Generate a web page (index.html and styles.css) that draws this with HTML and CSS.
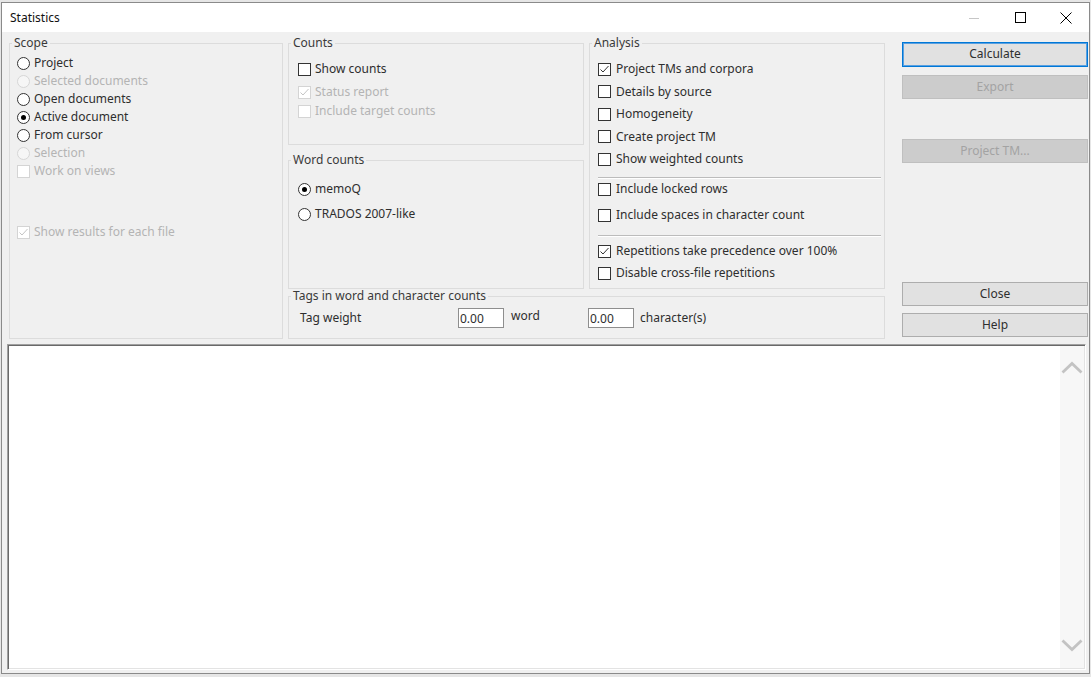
FILE: index.html
```html
<!DOCTYPE html>
<html>
<head>
<meta charset="utf-8">
<title>Statistics</title>
<link rel="stylesheet" href="styles.css">
</head>
<body>
<div class="window">
  <div class="titlebar">
    <span class="title">Statistics</span>
    <div class="caption">
      <span class="cap-btn"><svg width="10" height="10" viewBox="0 0 10 10"><line x1="0" y1="5.5" x2="10" y2="5.5" stroke="#c6c6c6" stroke-width="1"/></svg></span>
      <span class="cap-btn"><svg width="11" height="11" viewBox="0 0 11 11"><rect x="0.5" y="0.5" width="10" height="10" fill="none" stroke="#000" stroke-width="1"/></svg></span>
      <span class="cap-btn"><svg width="12" height="12" viewBox="0 0 12 12"><path d="M0.5 0.5 L11.5 11.5 M11.5 0.5 L0.5 11.5" stroke="#000" stroke-width="1" fill="none"/></svg></span>
    </div>
  </div>
  <div class="client">
    <div class="top">
      <fieldset class="group scope">
        <legend>Scope</legend>
        <div class="gbody scope-body">
          <div class="opt"><span class="rb"></span>Project</div>
          <div class="opt dis"><span class="rb"></span>Selected documents</div>
          <div class="opt"><span class="rb"></span>Open documents</div>
          <div class="opt"><span class="rb on"></span>Active document</div>
          <div class="opt"><span class="rb"></span>From cursor</div>
          <div class="opt dis"><span class="rb"></span>Selection</div>
          <div class="opt dis"><span class="cb"></span>Work on views</div>
          <div class="opt dis each"><span class="cb"><svg width="11" height="11" viewBox="0 0 11 11"><polyline points="1.5,5.5 4,8 9.5,2" fill="none" stroke="#c4c4c4" stroke-width="1"/></svg></span>Show results for each file</div>
        </div>
      </fieldset>

      <div class="center">
        <div class="cols">
          <div class="midcol">
            <fieldset class="group counts">
              <legend>Counts</legend>
              <div class="gbody counts-body">
                <div class="opt"><span class="cb"></span>Show counts</div>
                <div class="opt dis r2"><span class="cb"><svg width="11" height="11" viewBox="0 0 11 11"><polyline points="1.5,5.5 4,8 9.5,2" fill="none" stroke="#c4c4c4" stroke-width="1"/></svg></span>Status report</div>
                <div class="opt dis r3"><span class="cb"></span>Include target counts</div>
              </div>
            </fieldset>
            <fieldset class="group wordcounts">
              <legend>Word counts</legend>
              <div class="gbody wc-body">
                <div class="opt"><span class="rb on"></span>memoQ</div>
                <div class="opt r2"><span class="rb"></span>TRADOS 2007-like</div>
              </div>
            </fieldset>
          </div>
          <fieldset class="group analysis">
            <legend>Analysis</legend>
            <div class="gbody an-body">
              <div class="opt"><span class="cb"><svg width="11" height="11" viewBox="0 0 11 11"><polyline points="1.5,5.5 4,8 9.5,2" fill="none" stroke="#333" stroke-width="1"/></svg></span>Project TMs and corpora</div>
              <div class="opt"><span class="cb"></span>Details by source</div>
              <div class="opt"><span class="cb"></span>Homogeneity</div>
              <div class="opt"><span class="cb"></span>Create project TM</div>
              <div class="opt"><span class="cb"></span>Show weighted counts</div>
              <div class="sep sep1"></div>
              <div class="opt"><span class="cb"></span>Include locked rows</div>
              <div class="opt m6"><span class="cb"></span>Include spaces in character count</div>
              <div class="sep sep2"></div>
              <div class="opt m4"><span class="cb"><svg width="11" height="11" viewBox="0 0 11 11"><polyline points="1.5,5.5 4,8 9.5,2" fill="none" stroke="#333" stroke-width="1"/></svg></span>Repetitions take precedence over 100%</div>
              <div class="opt m2"><span class="cb"></span>Disable cross-file repetitions</div>
            </div>
          </fieldset>
        </div>
        <fieldset class="group tags">
          <legend>Tags in word and character counts</legend>
          <div class="gbody tags-body">
            <span class="tw">Tag weight</span>
            <input class="num" type="text" value="0.00">
            <span class="word">word</span>
            <input class="num" type="text" value="0.00">
            <span class="chars">character(s)</span>
          </div>
        </fieldset>
      </div>

      <div class="buttons">
        <div class="btn default b-calc">Calculate</div>
        <div class="btn disabled b-export">Export</div>
        <div class="btn disabled b-ptm">Project TM...</div>
        <div class="btn b-close">Close</div>
        <div class="btn b-help">Help</div>
      </div>
    </div>

    <div class="output">
      <div class="out-text"></div>
      <div class="scroll">
        <svg width="22" height="13" viewBox="0 0 22 13"><path d="M1.5 11.5 L11 2.5 L20.5 11.5" fill="none" stroke="#c3c3c3" stroke-width="2.8"/></svg>
        <svg width="22" height="13" viewBox="0 0 22 13"><path d="M1.5 1.5 L11 10.5 L20.5 1.5" fill="none" stroke="#c3c3c3" stroke-width="2.8"/></svg>
      </div>
    </div>
  </div>
</div>
</body>
</html>
```

FILE: styles.css
```css
html, body {
  margin: 0;
  padding: 0;
}
body {
  background: #e6e6e6;
  font-family: "Noto Sans", "Liberation Sans", sans-serif;
  font-size: 12px;
  color: #333;
  overflow: hidden;
  width: 1091px;
  height: 677px;
}
.window {
  margin: 2px 0 0 1px;
  width: 1089px;
  height: 672px;
  box-sizing: border-box;
  border: 1px solid #8a8a8a;
  background: #f0f0f0;
  display: flex;
  flex-direction: column;
}
.titlebar {
  height: 29px;
  flex: none;
  background: #fff;
  display: flex;
  align-items: center;
}
.title {
  flex: 1;
  padding-left: 8px;
  line-height: 14px;
  color: #111;
}
.caption {
  display: flex;
  height: 29px;
}
.cap-btn {
  width: 46px;
  display: flex;
  align-items: center;
  justify-content: center;
}
.client {
  flex: 1;
  display: flex;
  flex-direction: column;
  padding: 4px 1px 3px 5px;
  min-height: 0;
}
.top {
  display: flex;
  height: 303px;
  margin-left: 2px;
  flex: none;
}
fieldset.group {
  margin: 0;
  padding: 0;
  border: 1px solid #dcdcdc;
  box-sizing: border-box;
  min-width: 0;
}
fieldset.group legend {
  margin-left: 2px;
  padding: 0 2px;
  line-height: 14px;
  color: #3a3a3a;
}
.scope {
  width: 274px;
  height: 303px;
}
.center {
  margin-left: 5px;
  width: 597px;
  display: flex;
  flex-direction: column;
}
.cols {
  display: flex;
  height: 253px;
  gap: 5px;
}
.midcol {
  width: 296px;
  display: flex;
  flex-direction: column;
  gap: 8px;
}
.counts {
  height: 109px;
}
.wordcounts {
  height: 136px;
}
.analysis {
  width: 296px;
  height: 253px;
}
.tags {
  height: 50px;
}
.opt {
  display: flex;
  align-items: center;
  gap: 4px;
  height: 18px;
  line-height: 14px;
  white-space: nowrap;
  color: #2e2e2e;
}
.opt.dis {
  color: #b4b4b4;
}
.rb {
  width: 13px;
  height: 13px;
  box-sizing: border-box;
  border: 1px solid #333;
  border-radius: 50%;
  background: #fff;
  flex: none;
  display: flex;
  align-items: center;
  justify-content: center;
}
.rb.on::after {
  content: "";
  width: 5px;
  height: 5px;
  border-radius: 50%;
  background: #000;
}
.dis .rb {
  border-color: #d6d6d6;
  background: #f6f6f6;
}
.cb {
  width: 13px;
  height: 13px;
  box-sizing: border-box;
  border: 1px solid #333;
  background: #fff;
  flex: none;
  display: flex;
  align-items: center;
  justify-content: center;
}
.dis .cb {
  border-color: #d4d4d4;
}
.scope-body {
  padding: 4px 0 0 7px;
}
.scope-body .each {
  margin-top: 43px;
}
.counts-body {
  padding: 10px 0 0 9px;
}
.counts-body .r2 {
  margin-top: 5px;
}
.counts-body .r3 {
  margin-top: 1px;
}
.wc-body {
  padding: 13px 0 0 9px;
}
.wc-body .r2 {
  margin-top: 7px;
}
.an-body {
  padding: 9px 3px 0 8px;
}
.an-body .opt {
  height: 20px;
  gap: 5px;
}
.an-body .opt + .opt {
  margin-top: 2.5px;
}
.an-body .opt.m6 {
  margin-top: 6px;
}
.an-body .opt.m4 {
  margin-top: 4px;
}
.an-body .opt.m2 {
  margin-top: 2px;
}
.sep {
  height: 0;
  border-top: 1px solid #bcbcbc;
  border-bottom: 1px solid #fff;
}
.sep1 {
  margin-top: 8px;
}
.sep2 {
  margin-top: 10px;
}
.tags-body {
  display: flex;
  align-items: center;
  height: 22px;
  padding: 4px 0 0 11px;
  line-height: 14px;
  color: #2e2e2e;
}
.tw {
  width: 158px;
}
.num {
  width: 46px;
  height: 20px;
  box-sizing: border-box;
  border: 1px solid #8e8e8e;
  background: #fff;
  padding: 0 1px;
  margin: 0;
  font-family: "Noto Sans", "Liberation Sans", sans-serif;
  font-size: 12px;
  line-height: 18px;
  color: #2e2e2e;
  outline: none;
}
.word {
  margin-left: 7px;
  width: 77px;
  margin-bottom: 4px;
}
.chars {
  margin-left: 6px;
}
.buttons {
  margin-left: 17px;
  width: 186px;
  display: flex;
  flex-direction: column;
}
.btn {
  height: 24px;
  box-sizing: border-box;
  border: 1px solid #adadad;
  background: #e1e1e1;
  text-align: center;
  line-height: 22px;
  color: #2e2e2e;
}
.btn.default {
  border-color: #0078d7;
  box-shadow: inset 0 0 0 1px #5aa0e0;
}
.btn.disabled {
  background: #cccccc;
  border-color: #bfbfbf;
  color: #a3a3a3;
}
.b-calc {
  margin-top: 6px;
  height: 25px;
}
.b-export {
  margin-top: 8px;
}
.b-ptm {
  margin-top: 40px;
}
.b-close {
  margin-top: 119px;
}
.b-help {
  margin-top: 7px;
}
.output {
  flex: 1;
  margin-top: 5px;
  margin-right: 2px;
  display: flex;
  background: #fff;
  border-top: 1px solid #a0a0a0;
  border-left: 1px solid #a0a0a0;
  border-right: 1px solid #fff;
  border-bottom: 1px solid #fff;
  box-shadow: inset 1px 1px 0 #696969, inset -1px -1px 0 #e3e3e3;
  min-height: 0;
}
.out-text {
  flex: 1;
}
.scroll {
  width: 24px;
  margin: 1px 1px 1px 0;
  background: #f7f7f7;
  display: flex;
  flex-direction: column;
  align-items: center;
  justify-content: space-between;
  padding: 15px 0 16px;
}
```
